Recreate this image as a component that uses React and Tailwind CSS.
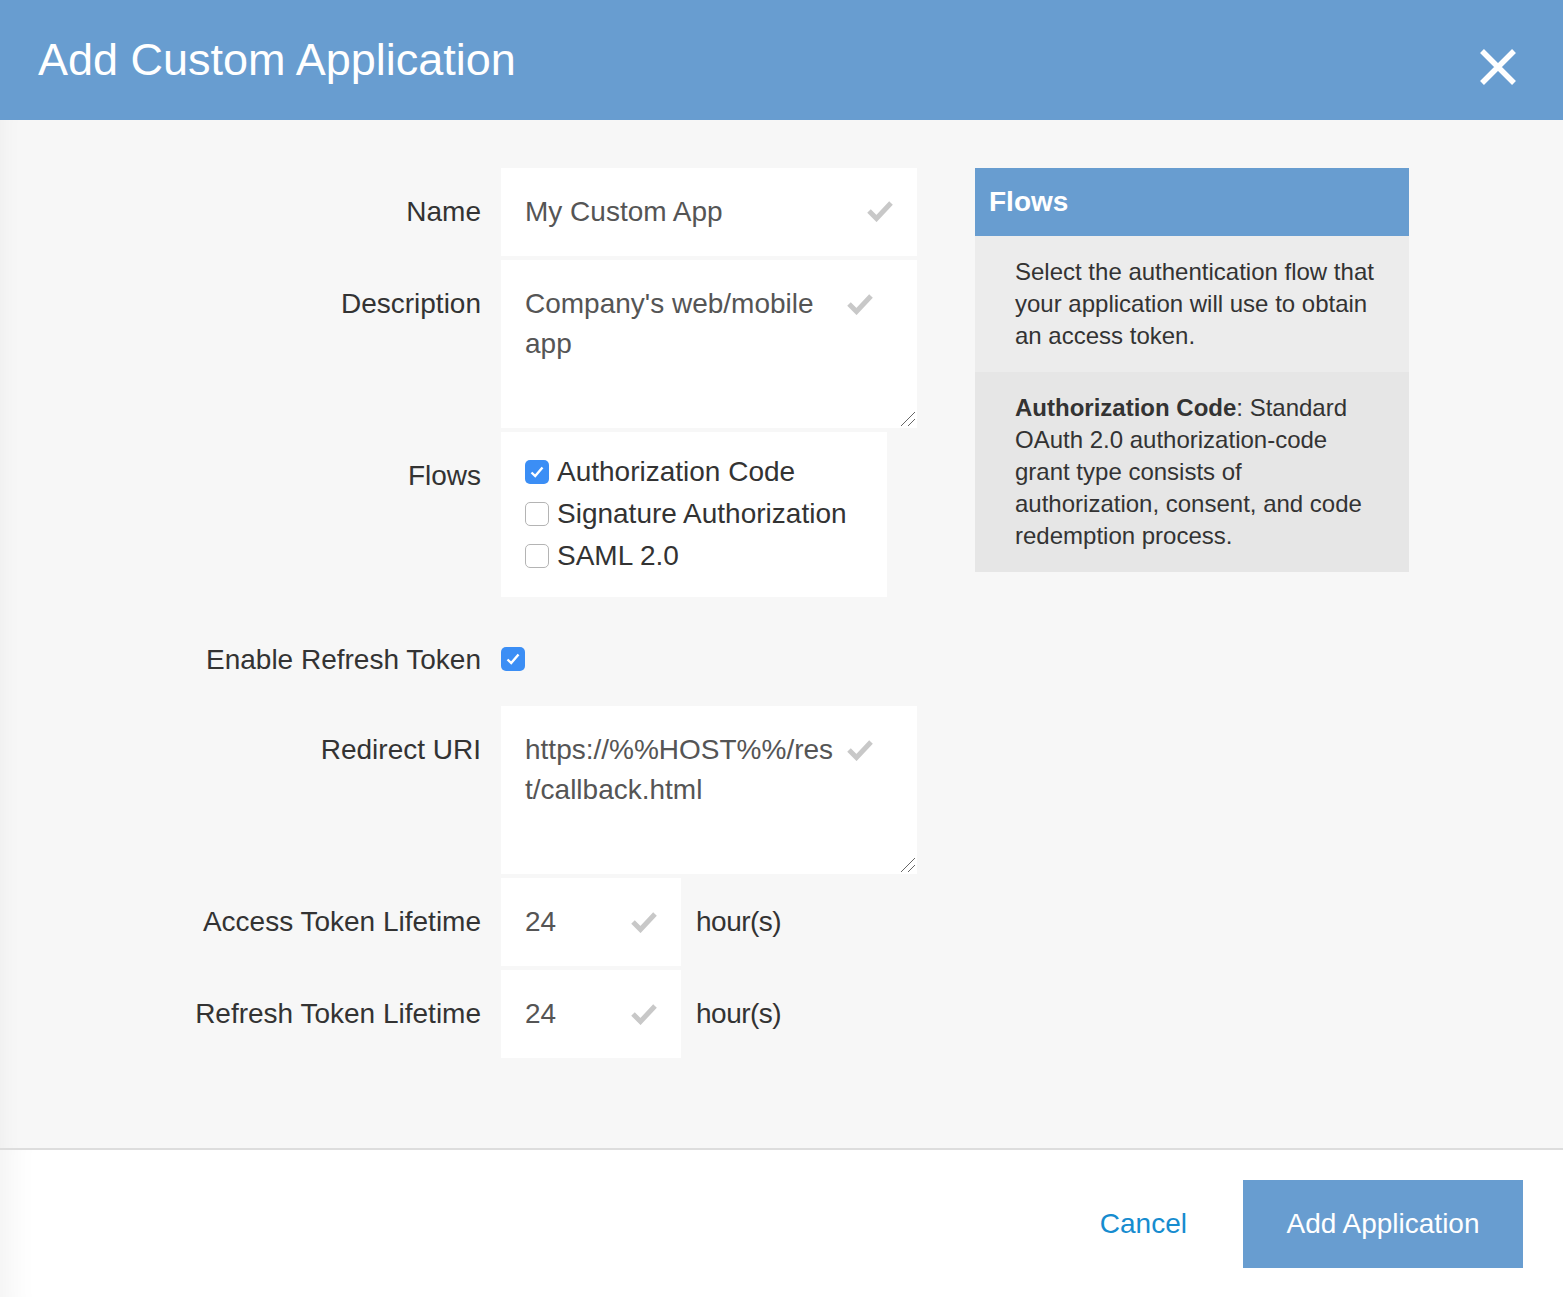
import { useState } from "react";

const FONT = "font-[family-name:'Liberation_Sans',Arial,sans-serif]";

function Tick({ className = "" }) {
  return (
    <svg width="26" height="23" viewBox="0 0 26 23" className={"shrink-0 " + className}>
      <path d="M2 12 L9.5 19.5 L24 4" fill="none" stroke="#c8c8c8" strokeWidth="5" />
    </svg>
  );
}

function Grip() {
  return (
    <svg width="16" height="16" viewBox="0 0 16 16" className="absolute right-[1px] bottom-[1px]">
      <path d="M1 15 L15 1 M8 15 L15 8" stroke="#666" strokeWidth="1" fill="none" />
    </svg>
  );
}

function Box({ checked, onClick }) {
  if (checked) {
    return (
      <span
        onClick={onClick}
        className="flex h-6 w-6 shrink-0 cursor-pointer items-center justify-center rounded-[5px] bg-[#3b8ef5]"
      >
        <svg width="14" height="12" viewBox="0 0 14 12">
          <path d="M1.5 6.5 L5.2 10 L12.5 1.5" fill="none" stroke="#fff" strokeWidth="2.4" />
        </svg>
      </span>
    );
  }
  return (
    <span
      onClick={onClick}
      className="h-6 w-6 shrink-0 cursor-pointer rounded-[5px] border border-[#b4b4b4] bg-white"
    />
  );
}

function Label({ children, className = "pt-6" }) {
  return (
    <div className={"w-[481px] shrink-0 text-right text-[28px] leading-[40px] text-[#333] " + className}>
      {children}
    </div>
  );
}

export default function App() {
  const [flows, setFlows] = useState({ code: true, sig: false, saml: false });
  const [refresh, setRefresh] = useState(true);

  const toggle = (k) => setFlows({ ...flows, [k]: !flows[k] });

  return (
    <div className={"flex min-h-[1297px] flex-col bg-white " + FONT}>
      {/* Header */}
      <div className="flex h-[120px] items-center justify-between bg-[#689dd0] pl-[38px] pr-[46px]">
        <h1 className="text-[45px] leading-[44px] text-white">Add Custom Application</h1>
        <svg width="38" height="38" viewBox="0 0 38 38" className="mt-[14px]">
          <path d="M3 3 L35 35 M35 3 L3 35" stroke="#fff" strokeWidth="5.5" />
        </svg>
      </div>

      {/* Body */}
      <div className="flex bg-[#f7f7f7] pt-12 pb-[90px] shadow-[inset_24px_0_24px_-24px_rgba(0,0,0,0.05)]">
        <div className="flex w-[917px] flex-col">
          {/* Name */}
          <div className="flex gap-5">
            <Label>Name</Label>
            <div className="flex h-[88px] w-[416px] justify-between bg-white px-6 pt-6 text-[28px] leading-[40px] text-[#555]">
              <span>My Custom App</span>
              <Tick className="mt-[7px]" />
            </div>
          </div>

          {/* Description */}
          <div className="mt-1 flex gap-5">
            <Label>Description</Label>
            <div className="relative flex h-[168px] w-[416px] justify-between bg-white pt-6 pl-6 pr-[44px] text-[28px] leading-[40px] text-[#555]">
              <span>
                Company's web/mobile
                <br />
                app
              </span>
              <Tick className="mt-[8px]" />
              <Grip />
            </div>
          </div>

          {/* Flows */}
          <div className="mt-1 flex gap-5">
            <Label>Flows</Label>
            <div className="w-[386px] bg-white pt-[19px] pb-5 pl-6 text-[28px] leading-[42px] text-[#333]">
              <div className="flex items-center gap-2">
                <Box checked={flows.code} onClick={() => toggle("code")} />
                <span>Authorization Code</span>
              </div>
              <div className="flex items-center gap-2">
                <Box checked={flows.sig} onClick={() => toggle("sig")} />
                <span>Signature Authorization</span>
              </div>
              <div className="flex items-center gap-2">
                <Box checked={flows.saml} onClick={() => toggle("saml")} />
                <span>SAML 2.0</span>
              </div>
            </div>
          </div>

          {/* Enable refresh token */}
          <div className="mt-[43px] flex h-10 gap-5">
            <Label className="">Enable Refresh Token</Label>
            <div className="pt-[7px]">
              <Box checked={refresh} onClick={() => setRefresh(!refresh)} />
            </div>
          </div>

          {/* Redirect URI */}
          <div className="mt-[26px] flex gap-5">
            <Label>Redirect URI</Label>
            <div className="relative flex h-[168px] w-[416px] justify-between bg-white pt-6 pl-6 pr-[44px] text-[28px] leading-[40px] text-[#555]">
              <span className="whitespace-nowrap">
                https://%%HOST%%/res
                <br />
                t/callback.html
              </span>
              <Tick className="mt-[8px]" />
              <Grip />
            </div>
          </div>

          {/* Access token lifetime */}
          <div className="mt-1 flex gap-5">
            <Label>Access Token Lifetime</Label>
            <div className="flex h-[88px] w-[180px] justify-between bg-white px-6 pt-6 text-[28px] leading-[40px] text-[#555]">
              <span>24</span>
              <Tick className="mt-[8px]" />
            </div>
            <span className="-ml-[5px] pt-6 text-[28px] leading-[40px] tracking-[-0.5px] text-[#333]">hour(s)</span>
          </div>

          {/* Refresh token lifetime */}
          <div className="mt-1 flex gap-5">
            <Label>Refresh Token Lifetime</Label>
            <div className="flex h-[88px] w-[180px] justify-between bg-white px-6 pt-6 text-[28px] leading-[40px] text-[#555]">
              <span>24</span>
              <Tick className="mt-[8px]" />
            </div>
            <span className="-ml-[5px] pt-6 text-[28px] leading-[40px] tracking-[-0.5px] text-[#333]">hour(s)</span>
          </div>
        </div>

        {/* Help panel */}
        <div className="ml-[58px] w-[434px] self-start">
          <div className="flex h-[68px] items-center bg-[#689dd0] pl-[14px] text-[28px] font-bold text-white">
            Flows
          </div>
          <div className="bg-[#ececec] py-5 pl-10 pr-5 text-[24px] leading-[32px] text-[#333]">
            Select the authentication flow that
            <br />
            your application will use to obtain
            <br />
            an access token.
          </div>
          <div className="bg-[#e6e6e6] py-5 pl-10 pr-5 text-[24px] leading-[32px] text-[#333]">
            <span className="font-bold">Authorization Code</span>: Standard
            <br />
            OAuth 2.0 authorization-code
            <br />
            grant type consists of
            <br />
            authorization, consent, and code
            <br />
            redemption process.
          </div>
        </div>
      </div>

      {/* Footer */}
      <div className="flex h-[149px] items-center justify-end border-t-2 border-[#dddddd] bg-white pr-10 shadow-[inset_40px_0_30px_-30px_rgba(0,0,0,0.05)]">
        <button className="text-[28px] text-[#168ccf]">Cancel</button>
        <button className="ml-14 h-[88px] w-[280px] bg-[#689dd0] text-[28px] text-white">
          Add Application
        </button>
      </div>
    </div>
  );
}
